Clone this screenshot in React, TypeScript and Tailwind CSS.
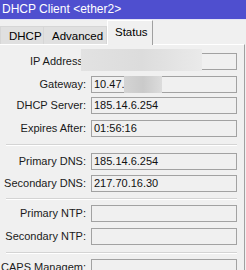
import React from "react";

function Field({ label, value, children }: { label: string; value?: string; children?: React.ReactNode }) {
  return (
    <div className="flex items-center h-[17px]">
      <div className="w-[88px] pr-[2px] text-right whitespace-nowrap text-[#1a1a1a]">{label}</div>
      <div className="relative ml-[3px] w-[146px] h-[17px] border border-[#a2a2a2] bg-[#f0f0f0] pl-[2px] leading-[15px] text-[#111]">
        {value}
        {children}
      </div>
    </div>
  );
}

function Sep() {
  return (
    <div className="ml-[6px] w-[231px] flex flex-col">
      <div className="h-px bg-[#d4d4d4]" />
      <div className="h-px bg-white" />
    </div>
  );
}

export default function App() {
  return (
    <div
      className="w-[246px] h-[270px] overflow-hidden bg-[#f0f0f0] text-[11px]"
      style={{ fontFamily: '"Liberation Sans", Arial, sans-serif' }}
    >
      <div className="h-[19px] bg-[#4f4fcf] text-white pl-[2px] leading-[19px] text-[12px]">DHCP Client &lt;ether2&gt;</div>
      <div className="h-px bg-[#e4e4f4]" />
      <div className="relative h-[24px] flex items-end text-[11.5px]">
        <div className="h-[18px] w-[44px] bg-[#e0e0e0] border border-[#d6d6d6] border-b-0 pl-[8px] leading-[18px]">DHCP</div>
        <div className="h-[18px] w-[63px] bg-[#e0e0e0] border-t border-r border-[#d6d6d6] pl-[8px] leading-[18px]">Advanced</div>
        <div className="h-[25px] w-[46px] bg-[#f0f0f0] border-l border-t border-white border-r-[#a0a0a0] border-r pl-[7px] leading-[22px] mb-[-1px] z-10">Status</div>
      </div>
      <div className="relative h-[226px] border-t border-white border-r border-r-[#a0a0a0] mr-[1px] flex flex-col">
        <div className="mt-[8px]">
          <Field label="IP Address:" />
        </div>
        <div className="absolute left-[81px] top-[4px] w-[121px] h-[22px] bg-gradient-to-r from-[#e2e2e2] via-[#dcdcdc] to-[#eaeaea]" />
        <div className="mt-[6px]">
          <Field label="Gateway:" value="10.47.">
            <div className="absolute left-[32px] top-[-1px] w-[38px] h-[17px] bg-gradient-to-r from-[#d4d4d4] via-[#cacaca] to-[#dcdcdc]" />
          </Field>
        </div>
        <div className="ml-[79px] mt-[1px] w-[103px] h-[2px] bg-[#c0262c]" />
        <div className="mt-[3px]">
          <Field label="DHCP Server:" value="185.14.6.254" />
        </div>
        <div className="mt-[6px]">
          <Field label="Expires After:" value="01:56:16" />
        </div>
        <div className="mt-[7px]">
          <Sep />
        </div>
        <div className="mt-[7px]">
          <Field label="Primary DNS:" value="185.14.6.254" />
        </div>
        <div className="mt-[5px]">
          <Field label="Secondary DNS:" value="217.70.16.30" />
        </div>
        <div className="mt-[6px]">
          <Sep />
        </div>
        <div className="mt-[5px]">
          <Field label="Primary NTP:" />
        </div>
        <div className="mt-[6px]">
          <Field label="Secondary NTP:" />
        </div>
        <div className="mt-[7px]">
          <Sep />
        </div>
        <div className="mt-[5px]">
          <Field label="CAPS Managem:" />
        </div>
      </div>
    </div>
  );
}
